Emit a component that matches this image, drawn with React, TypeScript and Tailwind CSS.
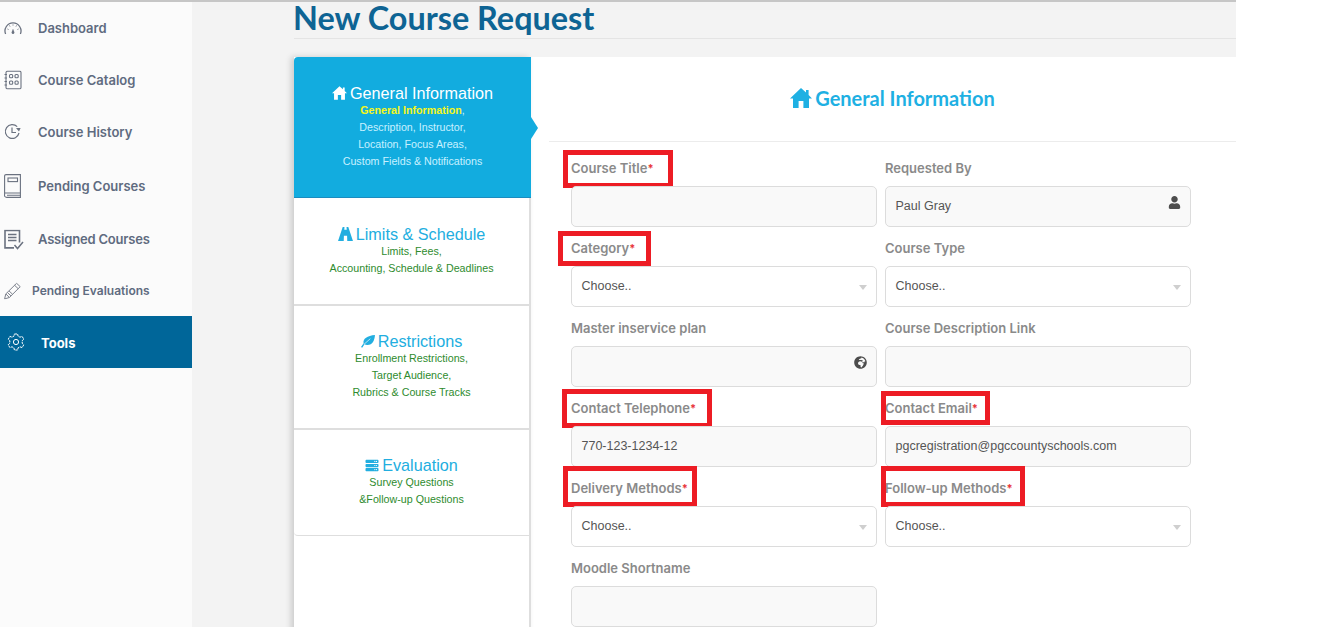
import React from "react";
import { FaServer, FaUser, FaGlobeAfrica } from "react-icons/fa";

const HomeIcon = ({ className }: { className: string }) => (
  <svg viewBox="0 0 22 20" className={className} fill="currentColor">
    <path d="M11 0 L16 4.6 V2 H18.6 V7 L22 10.4 H19 V20 H13.4 V13 H8.6 V20 H3 V10.4 H0 Z" />
  </svg>
);
const RoadIcon = ({ className }: { className: string }) => (
  <svg viewBox="0 0 16 15" className={className} fill="currentColor">
    <path d="M5 0 H6.9 L6.7 3 H9.3 L9.1 0 H11 L16 15 H9.9 L9.7 9.5 H6.3 L6.1 15 H0 Z" />
    <path d="M6.6 4.6 H9.4 L9.6 8 H6.4 Z" />
  </svg>
);
const LeafIcon = ({ className }: { className: string }) => (
  <svg viewBox="0 0 15 14" className={className} fill="currentColor">
    <path d="M15 0 C14.6 6 12.5 11 6.5 10.8 C5.4 10.8 4.4 10.4 3.8 10 L1.2 13.6 L0 13 L2.8 9 C1.6 4 7 0.6 15 0 Z" />
    <path d="M3 10.2 L10 4" stroke="white" strokeWidth="0.7" fill="none" />
  </svg>
);

const ic = "text-[#6b7280]";
const Gauge = () => (
  <svg viewBox="0 0 18 13" className={`w-[18px] h-[13px] ${ic}`} fill="none" stroke="currentColor" strokeWidth="1.3">
    <path d="M1.6 12.5 A8 8 0 1 1 16.4 12.5" />
    <path d="M9 8 V12" strokeWidth="1.4" />
    <circle cx="9" cy="11" r="1.4" fill="currentColor" stroke="none" />
    <path d="M3.5 7.5 L4.5 8 M5.5 4 L6 5 M9 3 V4 M12.5 4 L12 5 M14.5 7.5 L13.5 8" strokeWidth="1" />
  </svg>
);
const Catalog = () => (
  <svg viewBox="0 0 18 19" className={`w-[18px] h-[19px] ${ic}`} fill="none" stroke="currentColor" strokeWidth="1.1">
    <rect x="2" y="0.6" width="15" height="17.8" rx="1.5" />
    <rect x="5.5" y="4" width="3.2" height="3.2" rx="1" />
    <rect x="11" y="4" width="3.2" height="3.2" rx="1" />
    <rect x="5.5" y="10.5" width="3.2" height="3.2" rx="1" />
    <rect x="11" y="10.5" width="3.2" height="3.2" rx="1" />
    <path d="M0.5 4 H3 M0.5 7.5 H3 M0.5 11 H3 M0.5 14.5 H3" />
  </svg>
);
const History = () => (
  <svg viewBox="0 0 17 17" className={`w-[17px] h-[17px] ${ic}`} fill="none" stroke="currentColor" strokeWidth="1.2">
    <path d="M15 9.5 A6.9 6.9 0 1 1 13.2 3.2" />
    <path d="M8 4 V9 H12" />
    <path d="M12 4.6 L16.6 4.6 L15 8 Z" fill="currentColor" stroke="none" />
  </svg>
);
const Book = () => (
  <svg viewBox="0 0 17 24" className={`w-[17px] h-[24px] ${ic}`} fill="none" stroke="currentColor" strokeWidth="1.1">
    <path d="M0.6 20.5 V2 A1.4 1.4 0 0 1 2 0.6 H16.4 V23.4 H2.8 A2.2 2.2 0 0 1 0.6 20.5 Z" />
    <path d="M1 19 H16.4 M3 21.2 H16.4" />
    <rect x="4" y="4" width="9.5" height="3.6" />
  </svg>
);
const Assigned = () => (
  <svg viewBox="0 0 20 21" className={`w-[20px] h-[21px] ${ic}`} fill="none" stroke="currentColor">
    <path d="M10 18.4 H1 V1 H15.5 V13" strokeWidth="1.6" />
    <path d="M4 5 H12.5 M4 8 H12.5 M4 11 H12.5" strokeWidth="1.6" />
    <path d="M10.5 15.5 L13.5 19 L19 12.5" strokeWidth="1.5" />
  </svg>
);
const Pencil = () => (
  <svg viewBox="0 0 17 17" className="w-[17px] h-[17px] text-[#7c818c]" fill="none" stroke="currentColor" strokeWidth="1">
    <path d="M0.6 16.4 L1.8 11.4 L12.6 0.8 L16.2 4.2 L5.4 15 Z" />
    <path d="M1.8 11.4 L5.4 15 M3.4 10 L7 13.4 M10.6 2.8 L14.2 6.2 M5 8.4 L8.6 11.8" />
  </svg>
);
const Cog = () => (
  <svg viewBox="0 0 18 18" className="w-[18px] h-[18px] text-white" fill="none" stroke="currentColor" strokeWidth="1">
    <path d="M7.4 1 H10.6 L11.1 3.2 L13 4.2 L15.1 3.4 L16.8 6.2 L15.2 7.7 V10.3 L16.8 11.8 L15.1 14.6 L13 13.8 L11.1 14.8 L10.6 17 H7.4 L6.9 14.8 L5 13.8 L2.9 14.6 L1.2 11.8 L2.8 10.3 V7.7 L1.2 6.2 L2.9 3.4 L5 4.2 L6.9 3.2 Z" strokeDasharray="2.6 0.7" />
    <circle cx="9" cy="9" r="2.6" />
  </svg>
);

const nav = [
  { label: "Dashboard", icon: <Gauge />, cls: "h-[52px] pl-[38px] pt-[2px]", text: "" },
  { label: "Course Catalog", icon: <Catalog />, cls: "h-[52px] pl-[38px] pt-[2px]", text: "" },
  { label: "Course History", icon: <History />, cls: "h-[52px] pl-[38px] pt-[2px]", text: "" },
  { label: "Pending Courses", icon: <Book />, cls: "h-[55px] pl-[38px] pt-[2px]", text: "" },
  { label: "Assigned Courses", icon: <Assigned />, cls: "h-[53px] pl-[38px]", text: "tracking-[-0.2px]" },
  { label: "Pending Evaluations", icon: <Pencil />, cls: "h-[50px] pl-[32px]", text: "text-[12px]" },
];

const labelFont = "font-['Inter','Liberation_Sans',sans-serif]";
const bodyFont = "font-['Liberation_Sans',Arial,sans-serif]";

type FieldProps = {
  label: string;
  required?: boolean;
  kind: "input" | "select";
  value?: string;
  icon?: React.ReactNode;
  box?: string;
};

const Field = ({ label, required, kind, value, icon, box }: FieldProps) => (
  <div className="h-[80px] w-[306px]">
    <div className={`relative h-[39px] flex items-center pt-[5px] text-[13px] font-semibold text-[#8a8a8a] ${labelFont}`}>
      <span>
        {label}
        {required && <span className="text-[#e8353a] text-[11px] font-bold align-[1px]">*</span>}
      </span>
      {box && <div className={`absolute border-[5px] border-[#ed1c24] ${box}`} />}
    </div>
    <div
      className={`relative h-[41px] rounded-[5px] border border-[#dcdcdc] flex items-center pl-[9.5px] text-[12.5px] text-[#555] ${bodyFont} ${
        kind === "select" ? "bg-white pb-[1px]" : "bg-[#f9f9f9]"
      }`}
    >
      <span>{value}</span>
      {kind === "select" && (
        <span className="absolute right-[9px] top-[18px] w-0 h-0 border-x-[4px] border-x-transparent border-t-[5px] border-t-[#cfcfcf]" />
      )}
      {icon && <span className="absolute right-[9px] top-[9px] text-[13px] text-[#4d4d4d]">{icon}</span>}
    </div>
  </div>
);

const Tab = ({
  icon,
  title,
  lines,
  cls,
}: {
  icon: React.ReactNode;
  title: string;
  lines: string[];
  cls: string;
}) => (
  <div className={`bg-white border-[#dedede] text-center ${cls}`}>
    <div className="flex items-center justify-center gap-[3px] mb-[1px] text-[16.2px] leading-[16px] text-[#22aee0]">
      {icon}
      <span>{title}</span>
    </div>
    {lines.map((l) => (
      <div key={l} className="text-[10.7px] leading-[17px] text-[#2e8b2e]">
        {l}
      </div>
    ))}
  </div>
);

export default function App() {
  return (
    <div className="h-[627px] overflow-hidden bg-white">
      <div className="w-[1236px] h-[627px] flex border-t-2 border-[#c6c6c6] bg-[#f3f3f3]">
        <aside className={`w-[192px] shrink-0 bg-[#fbfbfb] text-[13px] font-semibold text-[#5f6b80] ${labelFont}`}>
          {nav.map((n) => (
            <div key={n.label} className={`relative flex items-center ${n.cls}`}>
              <span className="absolute left-[4px] top-1/2 -translate-y-1/2 flex">{n.icon}</span>
              <span className={n.text}>{n.label}</span>
            </div>
          ))}
          <div className="relative flex items-center h-[52px] pl-[41px] pt-[3px] bg-[#006699] text-white font-bold">
            <span className="absolute left-[7px] top-[17px] flex">
              <Cog />
            </span>
            Tools
          </div>
        </aside>

        <main className="flex-1 pl-[102px] min-w-0">
          <div className="h-[37px] border-b border-[#e4e4e4]">
            <h1 className="-ml-[1px] text-[32.4px] leading-[32px] font-bold text-[#0e6494] font-['Lato',sans-serif]">New Course Request</h1>
          </div>
          <div className="flex mt-[18px] h-[600px]">
            <div className={`relative w-[237px] shrink-0 bg-white border-r-2 border-[#dedede] shadow-[-3px_0_6px_rgba(0,0,0,0.16)] ${bodyFont}`}>
              <div className="relative h-[141px] rounded-tl-[4px] bg-[#12acdf] border-b border-[#1b8cbf] text-center pt-[28px] -mr-[2px]">
                <div className="flex items-center justify-center gap-[3px] mb-[1px] text-[16.2px] leading-[16px] text-white">
                  <HomeIcon className="w-[15px] h-[14px]" />
                  <span>General Information</span>
                </div>
                <div className="text-[10.7px] leading-[17px] text-[#c8f1ff]">
                  <div>
                    <span className="font-bold text-[#f6f61a]">General Information</span>,
                  </div>
                  <div>Description, Instructor,</div>
                  <div>Location, Focus Areas,</div>
                  <div>Custom Fields &amp; Notifications</div>
                </div>
                <span className="absolute -right-[7px] top-[60px] w-0 h-0 border-y-[11px] border-y-transparent border-l-[7px] border-l-[#12acdf]" />
              </div>
              <Tab
                cls="h-[108px] border-b-2 pt-[28px]"
                icon={<RoadIcon className="w-[15px] h-[14px]" />}
                title="Limits & Schedule"
                lines={["Limits, Fees,", "Accounting, Schedule & Deadlines"]}
              />
              <Tab
                cls="h-[124px] border-b-2 pt-[27px]"
                icon={<LeafIcon className="w-[14px] h-[13px]" />}
                title="Restrictions"
                lines={["Enrollment Restrictions,", "Target Audience,", "Rubrics & Course Tracks"]}
              />
              <Tab
                cls="h-[106px] border-b rounded-bl-[4px] pt-[27px]"
                icon={<FaServer className="w-[14px] h-[13px]" />}
                title="Evaluation"
                lines={["Survey Questions", "&Follow-up Questions"]}
              />
            </div>

            <div className="flex-1 min-w-0 bg-white pl-[18px]">
              <div className="h-[85px] border-b border-[#ececec] flex items-center justify-center gap-[3px] pb-[3px] text-[#1eb0e3]">
                <HomeIcon className="w-[22px] h-[20px]" />
                <span className="text-[20px] font-bold font-['Lato',sans-serif]">General Information</span>
              </div>
              <div className="pt-[5px] pl-[22px] grid grid-cols-[306px_306px] gap-x-[8px]">
                <Field label="Course Title" required kind="input" box="-left-[8px] top-[3px] w-[110px] h-[38px]" />
                <Field label="Requested By" kind="input" value="Paul Gray" icon={<FaUser />} />
                <Field label="Category" required kind="select" value="Choose.." box="-left-[13px] top-[4px] w-[93px] h-[35px]" />
                <Field label="Course Type" kind="select" value="Choose.." />
                <Field label="Master inservice plan" kind="input" icon={<FaGlobeAfrica />} />
                <Field label="Course Description Link" kind="input" />
                <Field label="Contact Telephone" required kind="input" value="770-123-1234-12" box="-left-[9px] top-[2px] w-[150px] h-[39px]" />
                <Field label="Contact Email" required kind="input" value="pgcregistration@pgccountyschools.com" box="-left-[4px] top-[4px] w-[109px] h-[34px]" />
                <Field label="Delivery Methods" required kind="select" value="Choose.." box="-left-[8px] -top-[1px] w-[134px] h-[41px]" />
                <Field label="Follow-up Methods" required kind="select" value="Choose.." box="-left-[4px] -top-[1px] w-[144px] h-[41px]" />
                <Field label="Moodle Shortname" kind="input" />
              </div>
            </div>
          </div>
        </main>
      </div>
    </div>
  );
}
